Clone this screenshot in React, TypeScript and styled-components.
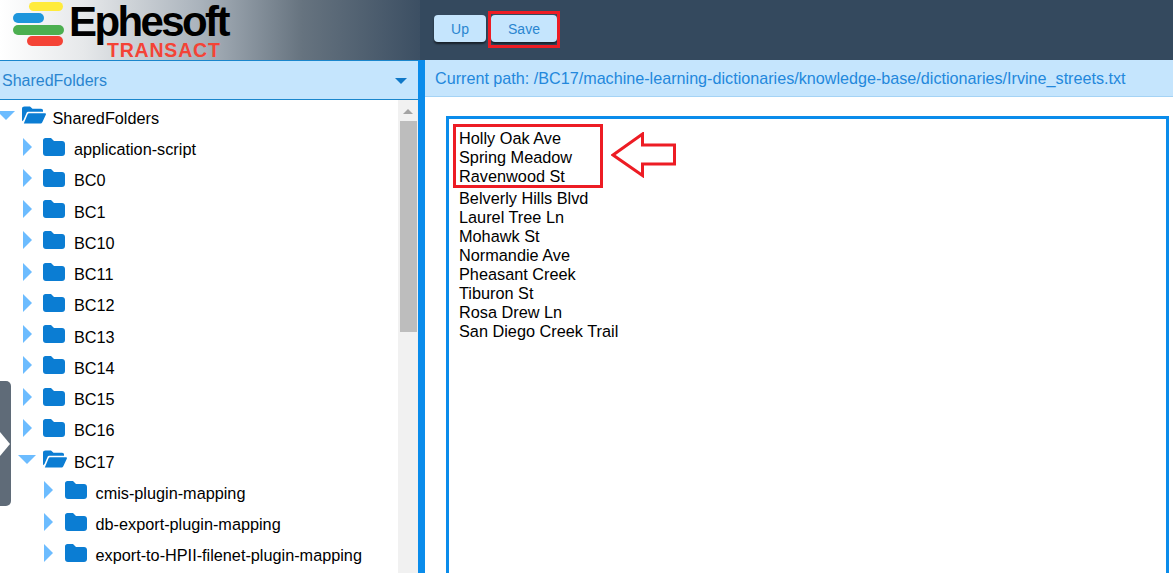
import React from 'react';
import styled, { createGlobalStyle } from 'styled-components';

const GlobalStyle = createGlobalStyle`
  html, body {
    margin: 0;
    padding: 0;
    height: 100%;
    overflow: hidden;
    background: #fff;
    font-family: "Liberation Sans", Arial, sans-serif;
  }
`;

const Page = styled.div`
  width: 1173px;
  height: 573px;
  position: relative;
  overflow: hidden;
  display: flex;
  flex-direction: column;
`;

const Header = styled.header`
  height: 60px;
  flex: none;
  display: flex;
  align-items: flex-start;
  background: #34495e;
`;

const LogoArea = styled.div`
  width: 420px;
  height: 60px;
  flex: none;
  position: relative;
  overflow: hidden;
  background: linear-gradient(90deg, #fff 0%, #e6e8ea 20%, #a9b2bb 48%, #66737f 72%, #3c4f63 100%);
`;

const LogoBars = styled.svg`
  position: absolute;
  left: 12px;
  top: 0;
`;

const LogoWord = styled.div`
  position: absolute;
  left: 69px;
  top: 3px;
  font-size: 42px;
  line-height: 38px;
  font-weight: 700;
  letter-spacing: -2.6px;
  color: #000;
`;

const LogoSub = styled.div`
  position: absolute;
  left: 107px;
  top: 42px;
  font-size: 19.5px;
  line-height: 17px;
  font-weight: 700;
  letter-spacing: 0.8px;
  color: #f44336;
`;

const Toolbar = styled.div`
  display: flex;
  gap: 5px;
  padding: 15px 0 0 14px;
`;

const ToolButton = styled.button`
  height: 27px;
  width: ${(p: { $w: number }) => p.$w}px;
  padding: 0;
  border: none;
  border-radius: 4px;
  background: #c5e5fd;
  color: #2a85d0;
  font-family: inherit;
  font-size: 14px;
  box-shadow: 0 2px 2px rgba(0, 0, 0, 0.55);
`;

const Body = styled.div`
  flex: 1;
  min-height: 0;
  display: flex;
`;

const LeftPane = styled.aside`
  width: 418px;
  flex: none;
  display: flex;
  flex-direction: column;
`;

const PickerBar = styled.div`
  height: 37px;
  flex: none;
  display: flex;
  align-items: center;
  justify-content: space-between;
  padding: 1px 11px 0 2px;
  background: #c5e5fd;
  border-top: 1px solid #1b86cc;
  border-bottom: 1px solid #1b86cc;
  color: #2a85d0;
  font-size: 16px;
`;

const Caret = styled.i`
  width: 0;
  height: 0;
  border-left: 6px solid transparent;
  border-right: 6px solid transparent;
  border-top: 6px solid #0f78c8;
`;

const TreeWrap = styled.div`
  flex: 1;
  min-height: 0;
  display: flex;
  overflow: hidden;
`;

const Tree = styled.ul`
  flex: 1;
  min-width: 0;
  list-style: none;
  margin: 0;
  padding: 2.7px 0 0;
`;

const Row = styled.li<{ $level: number }>`
  height: 31.25px;
  display: flex;
  align-items: center;
  padding-left: ${(p) => p.$level * 21.5}px;
  font-size: 16.25px;
  color: #000;
  white-space: nowrap;
`;

const ArrowSlot = styled.span`
  width: 11px;
  margin-right: 10.5px;
  margin-bottom: 6px;
  flex: none;
  display: flex;
  justify-content: center;
  svg {
    flex: none;
    display: block;
  }
`;

const FolderSlot = styled.span`
  width: 31px;
  margin-bottom: 6px;
  flex: none;
  svg {
    display: block;
  }
`;

const Scrollbar = styled.div`
  width: 20px;
  flex: none;
  background: #f1f1f1;
  display: flex;
  flex-direction: column;
  align-items: center;
`;

const ScrollUp = styled.i`
  margin-top: 9px;
  width: 0;
  height: 0;
  border-left: 5px solid transparent;
  border-right: 5px solid transparent;
  border-bottom: 5px solid #a3a3a3;
`;

const ScrollThumb = styled.div`
  width: 17px;
  height: 211px;
  margin-top: 7px;
  background: #bdbdbd;
`;

const Divider = styled.div`
  width: 7px;
  flex: none;
  background: #0a8ceb;
`;

const RightPane = styled.main`
  flex: 1;
  min-width: 0;
  display: flex;
  flex-direction: column;
`;

const PathBar = styled.div`
  height: 36px;
  flex: none;
  display: flex;
  align-items: center;
  padding: 0 0 0 10px;
  background: #c5e5fd;
  border-bottom: 1px solid #a5d3f5;
  color: #2388dc;
  font-size: 16.16px;
`;

const EditorArea = styled.div`
  flex: 1;
  min-height: 0;
  padding: 19px 4px 0 21px;
`;

const Editor = styled.div`
  height: 480px;
  border: 3px solid #0a8ceb;
  padding: 10px 0 0 10px;
  font-size: 16.3px;
  line-height: 19px;
  color: #000;
`;

const Group = styled.div`
  margin-bottom: 2.5px;
`;

const Line = styled.div`
  white-space: nowrap;
`;

const RedBox = styled.div<{ $x: number; $y: number; $w: number; $h: number }>`
  position: absolute;
  left: ${(p) => p.$x}px;
  top: ${(p) => p.$y}px;
  width: ${(p) => p.$w}px;
  height: ${(p) => p.$h}px;
  box-sizing: border-box;
  border: 3px solid #ed1c24;
  pointer-events: none;
`;

const RedArrow = styled.svg`
  position: absolute;
  left: 611px;
  top: 132px;
`;

const SideHandle = styled.div`
  position: absolute;
  left: 0;
  top: 381px;
  width: 11px;
  height: 125px;
  background: #5f6b78;
  border-radius: 0 5px 5px 0;
  display: flex;
  align-items: center;
`;

const HandleArrow = styled.i`
  width: 0;
  height: 0;
  border-top: 12px solid transparent;
  border-bottom: 12px solid transparent;
  border-left: 10px solid #fff;
`;

function Expander({ open }: { open: boolean }) {
  return (
    <ArrowSlot>
      {open ? (
        <svg width="18" height="9" viewBox="0 0 18 9">
          <path d="M0 0H18L9 9Z" fill="#6cbcff" />
        </svg>
      ) : (
        <svg width="9" height="18" viewBox="0 0 9 18">
          <path d="M0 0L9 9L0 18Z" fill="#6cbcff" />
        </svg>
      )}
    </ArrowSlot>
  );
}

function FolderIcon({ open }: { open: boolean }) {
  return (
    <FolderSlot>
      {open ? (
        <svg width="24" height="18" viewBox="0 0 24 20" preserveAspectRatio="none">
          <path
            d="M0 3C0 1.300 1 .500 2.500 .500H8L10.500 3H19C20.500 3 21 4 21 5V6.500H7C5.500 6.500 4.800 7 4.300 8.200L1.500 15.500L0 17Z"
            fill="#0b7dd3"
          />
          <path
            d="M7.500 8H23C24 8 24.200 8.800 23.800 9.700L20.300 18C20 18.800 19.300 19.500 18 19.500H1.800L5.500 9.500C5.900 8.500 6.500 8 7.500 8Z"
            fill="#0b7dd3"
          />
        </svg>
      ) : (
        <svg width="22" height="18" viewBox="0 0 22 18">
          <path
            d="M0 2.500C0 1 1 0 2.500 0H8L11 3H19C20.800 3 22 4.200 22 6V15C22 16.800 20.800 18 19 18H3C1.200 18 0 16.800 0 15Z"
            fill="#0b7dd3"
          />
        </svg>
      )}
    </FolderSlot>
  );
}

const folders: { name: string; level: number; open?: boolean }[] = [
  { name: 'SharedFolders', level: 0, open: true },
  { name: 'application-script', level: 1 },
  { name: 'BC0', level: 1 },
  { name: 'BC1', level: 1 },
  { name: 'BC10', level: 1 },
  { name: 'BC11', level: 1 },
  { name: 'BC12', level: 1 },
  { name: 'BC13', level: 1 },
  { name: 'BC14', level: 1 },
  { name: 'BC15', level: 1 },
  { name: 'BC16', level: 1 },
  { name: 'BC17', level: 1, open: true },
  { name: 'cmis-plugin-mapping', level: 2 },
  { name: 'db-export-plugin-mapping', level: 2 },
  { name: 'export-to-HPII-filenet-plugin-mapping', level: 2 },
];

const added = ['Holly Oak Ave', 'Spring Meadow', 'Ravenwood St'];
const streets = [
  'Belverly Hills Blvd',
  'Laurel Tree Ln',
  'Mohawk St',
  'Normandie Ave',
  'Pheasant Creek',
  'Tiburon St',
  'Rosa Drew Ln',
  'San Diego Creek Trail',
];

export default function App() {
  return (
    <Page>
      <GlobalStyle />
      <Header>
        <LogoArea>
          <LogoBars width="56" height="50" viewBox="0 0 56 50">
            <rect x="17" y="2" width="34" height="9" rx="4.500" fill="#ffeb3b" />
            <rect x="1" y="13" width="31" height="10" rx="5" fill="#1e96dc" />
            <rect x="1" y="25" width="51" height="10" rx="5" fill="#4caf50" />
            <rect x="15" y="36" width="36" height="10" rx="5" fill="#f44336" />
          </LogoBars>
          <LogoWord>Ephesoft</LogoWord>
          <LogoSub>TRANSACT</LogoSub>
        </LogoArea>
        <Toolbar>
          <ToolButton $w={52}>Up</ToolButton>
          <ToolButton $w={66}>Save</ToolButton>
        </Toolbar>
      </Header>
      <Body>
        <LeftPane>
          <PickerBar>
            SharedFolders
            <Caret />
          </PickerBar>
          <TreeWrap>
            <Tree>
              {folders.map((f) => (
                <Row key={f.name} $level={f.level}>
                  <Expander open={!!f.open} />
                  <FolderIcon open={!!f.open} />
                  <span>{f.name}</span>
                </Row>
              ))}
            </Tree>
            <Scrollbar>
              <ScrollUp />
              <ScrollThumb />
            </Scrollbar>
          </TreeWrap>
        </LeftPane>
        <Divider />
        <RightPane>
          <PathBar>Current path: /BC17/machine-learning-dictionaries/knowledge-base/dictionaries/Irvine_streets.txt</PathBar>
          <EditorArea>
            <Editor>
              <Group>
                {added.map((s) => (
                  <Line key={s}>{s}</Line>
                ))}
              </Group>
              {streets.map((s) => (
                <Line key={s}>{s}</Line>
              ))}
            </Editor>
          </EditorArea>
        </RightPane>
      </Body>
      <RedBox $x={488} $y={11} $w={72} $h={37} />
      <RedBox $x={453} $y={124} $w={150} $h={64} />
      <RedArrow width="66" height="46" viewBox="0 0 66 46">
        <path d="M2 23L31.500 2V13H63.500V32H31.500V43.500Z" fill="#fff" stroke="#ed1c24" strokeWidth="3" />
      </RedArrow>
      <SideHandle>
        <HandleArrow />
      </SideHandle>
    </Page>
  );
}
